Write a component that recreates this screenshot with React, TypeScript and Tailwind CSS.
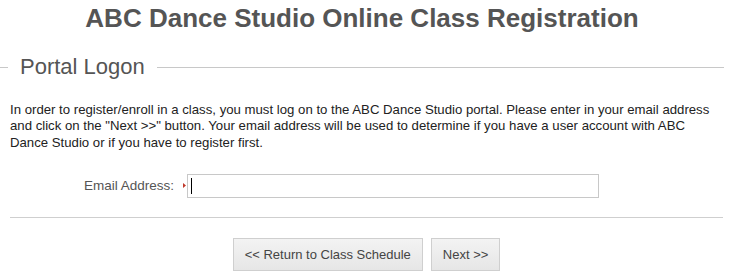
import { useState } from "react";

export default function App() {
  const [email, setEmail] = useState("");

  return (
    <div className="w-[724px] bg-white font-['Liberation_Sans',Arial,sans-serif]">
      <h1 className="pt-[3px] text-center text-[26px] leading-[30px] font-bold text-[#555]">
        ABC Dance Studio Online Class Registration
      </h1>

      <div className="mt-[21px] flex h-[26px] items-center">
        <div className="h-px w-[8px] bg-[#c8c8c8]" />
        <span className="px-[12px] text-[22px] leading-[26px] text-[#555]">Portal Logon</span>
        <div className="h-px flex-1 bg-[#c8c8c8]" />
      </div>

      <div className="pl-[10px] pr-[1px]">
        <p className="mt-[22px] w-[702px] text-[13.2px] leading-[16.3px] text-[#222]">
          In order to register/enroll in a class, you must log on to the ABC Dance Studio portal. Please enter in your email
          address and click on the "Next &gt;&gt;" button. Your email address will be used to determine if you have a user
          account with ABC Dance Studio or if you have to register first.
        </p>

        <div className="mt-[23px] flex h-[24px] items-center">
          <label className="w-[164px] text-right text-[13.5px] text-[#555]">Email Address:</label>
          <div className="flex w-[13px] justify-end pr-[1px]">
            <svg width="3" height="5" viewBox="0 0 3 5">
              <polygon points="0,0 3,2.5 0,5" fill="#c0392b" />
            </svg>
          </div>
          <div className="relative">
            <input
              type="text"
              value={email}
              onChange={(e) => setEmail(e.target.value)}
              className="block h-[24px] w-[412px] border border-[#c8c8c8] bg-white px-[4px] text-[13px] text-[#222] caret-transparent outline-none"
            />
            {email === "" && <div className="absolute left-[4px] top-[4px] h-[16px] w-px bg-black" />}
          </div>
        </div>

        <div className="mt-[19px] h-px bg-[#cfcfcf]" />

        <div className="mt-[20px] flex justify-center gap-[8px]">
          <button className="h-[33px] border border-[#cfcfcf] bg-gradient-to-b from-[#f3f3f3] to-[#e6e6e6] px-[11px] text-[13px] text-[#444]">
            &lt;&lt; Return to Class Schedule
          </button>
          <button className="h-[33px] border border-[#cfcfcf] bg-gradient-to-b from-[#f3f3f3] to-[#e6e6e6] px-[11px] text-[13px] text-[#444]">
            Next &gt;&gt;
          </button>
        </div>
      </div>
    </div>
  );
}
